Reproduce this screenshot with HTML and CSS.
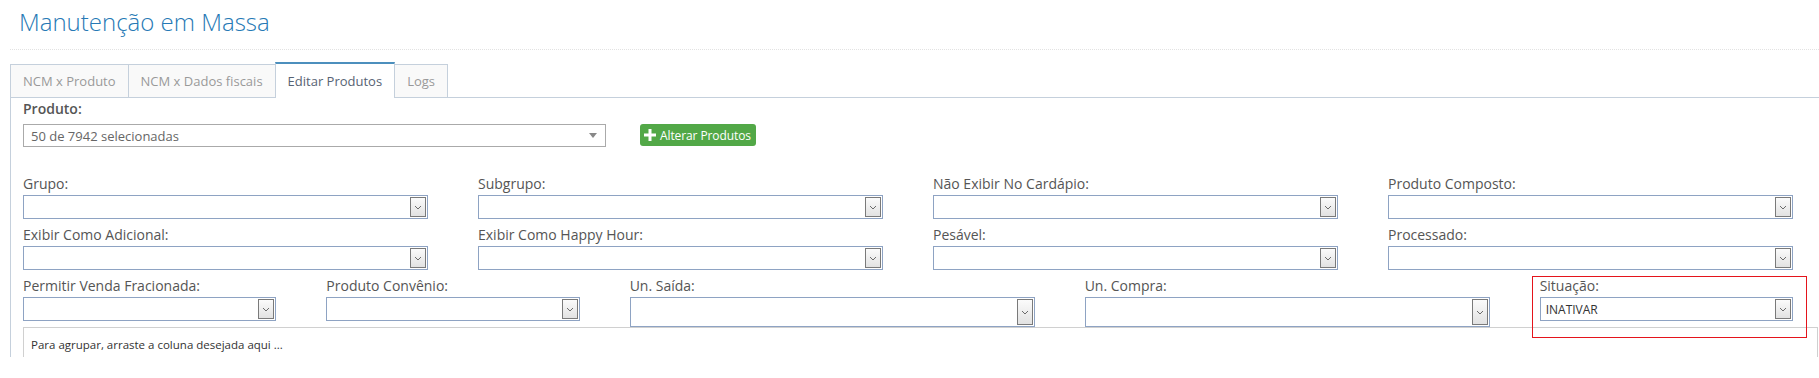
FILE: index.html
```html
<!DOCTYPE html>
<html lang="pt-BR">
<head>
  <meta charset="UTF-8">
  <title>Manutenção em Massa</title>
  <link rel="stylesheet" href="styles.css">
</head>
<body>
  <div class="page">
    <div class="page-header">
      <h1>Manutenção em Massa</h1>
    </div>

    <ul class="tabs">
      <li>NCM x Produto</li>
      <li>NCM x Dados fiscais</li>
      <li class="active">Editar Produtos</li>
      <li>Logs</li>
    </ul>

    <div class="tab-content">
      <label class="label-strong">Produto:</label>
      <div class="product-row">
        <div class="multiselect">
          <span>50 de 7942 selecionadas</span>
          <span class="caret"></span>
        </div>
        <button class="btn-success">
          <svg class="plus" viewBox="0 0 12 12" width="12" height="12"><path d="M4.5 0h3v4.5H12v3H7.5V12h-3V7.5H0v-3h4.5z" fill="#fff"/></svg>
          Alterar Produtos
        </button>
      </div>

      <div class="filters">
        <div class="field span-3">
          <label>Grupo:</label>
          <div class="combo"><span class="combo-btn"><svg viewBox="0 0 8 5" width="8" height="5"><polyline points="1,1 4,4 7,1" fill="none" stroke="#6b6b6b" stroke-width="1"/></svg></span></div>
        </div>
        <div class="field span-3">
          <label>Subgrupo:</label>
          <div class="combo"><span class="combo-btn"><svg viewBox="0 0 8 5" width="8" height="5"><polyline points="1,1 4,4 7,1" fill="none" stroke="#6b6b6b" stroke-width="1"/></svg></span></div>
        </div>
        <div class="field span-3">
          <label>Não Exibir No Cardápio:</label>
          <div class="combo"><span class="combo-btn"><svg viewBox="0 0 8 5" width="8" height="5"><polyline points="1,1 4,4 7,1" fill="none" stroke="#6b6b6b" stroke-width="1"/></svg></span></div>
        </div>
        <div class="field span-3">
          <label>Produto Composto:</label>
          <div class="combo"><span class="combo-btn"><svg viewBox="0 0 8 5" width="8" height="5"><polyline points="1,1 4,4 7,1" fill="none" stroke="#6b6b6b" stroke-width="1"/></svg></span></div>
        </div>

        <div class="field span-3">
          <label>Exibir Como Adicional:</label>
          <div class="combo"><span class="combo-btn"><svg viewBox="0 0 8 5" width="8" height="5"><polyline points="1,1 4,4 7,1" fill="none" stroke="#6b6b6b" stroke-width="1"/></svg></span></div>
        </div>
        <div class="field span-3">
          <label>Exibir Como Happy Hour:</label>
          <div class="combo"><span class="combo-btn"><svg viewBox="0 0 8 5" width="8" height="5"><polyline points="1,1 4,4 7,1" fill="none" stroke="#6b6b6b" stroke-width="1"/></svg></span></div>
        </div>
        <div class="field span-3">
          <label>Pesável:</label>
          <div class="combo"><span class="combo-btn"><svg viewBox="0 0 8 5" width="8" height="5"><polyline points="1,1 4,4 7,1" fill="none" stroke="#6b6b6b" stroke-width="1"/></svg></span></div>
        </div>
        <div class="field span-3">
          <label>Processado:</label>
          <div class="combo"><span class="combo-btn"><svg viewBox="0 0 8 5" width="8" height="5"><polyline points="1,1 4,4 7,1" fill="none" stroke="#6b6b6b" stroke-width="1"/></svg></span></div>
        </div>

        <div class="field span-2">
          <label>Permitir Venda Fracionada:</label>
          <div class="combo"><span class="combo-btn"><svg viewBox="0 0 8 5" width="8" height="5"><polyline points="1,1 4,4 7,1" fill="none" stroke="#6b6b6b" stroke-width="1"/></svg></span></div>
        </div>
        <div class="field span-2">
          <label>Produto Convênio:</label>
          <div class="combo"><span class="combo-btn"><svg viewBox="0 0 8 5" width="8" height="5"><polyline points="1,1 4,4 7,1" fill="none" stroke="#6b6b6b" stroke-width="1"/></svg></span></div>
        </div>
        <div class="field span-3">
          <label>Un. Saída:</label>
          <div class="combo tall"><span class="combo-btn"><svg viewBox="0 0 8 5" width="8" height="5"><polyline points="1,1 4,4 7,1" fill="none" stroke="#6b6b6b" stroke-width="1"/></svg></span></div>
        </div>
        <div class="field span-3">
          <label>Un. Compra:</label>
          <div class="combo tall"><span class="combo-btn"><svg viewBox="0 0 8 5" width="8" height="5"><polyline points="1,1 4,4 7,1" fill="none" stroke="#6b6b6b" stroke-width="1"/></svg></span></div>
        </div>
        <div class="field span-2 highlight">
          <label>Situação:</label>
          <div class="combo"><span class="combo-value">INATIVAR</span><span class="combo-btn"><svg viewBox="0 0 8 5" width="8" height="5"><polyline points="1,1 4,4 7,1" fill="none" stroke="#6b6b6b" stroke-width="1"/></svg></span></div>
        </div>
      </div>

      <div class="group-header">Para agrupar, arraste a coluna desejada aqui ...</div>
    </div>
  </div>
</body>
</html>
```

FILE: styles.css
```css
body {
  margin: 0;
  background: #ffffff;
  font-family: "Open Sans", "Noto Sans", sans-serif;
  color: #393939;
}

.page {
  padding-left: 10px;
  height: 378px;
  overflow: hidden;
}

.page-header {
  padding: 6px 0 11px 9px;
  border-bottom: 1px dotted #e2e2e2;
}

.page-header h1 {
  margin: 0;
  font-size: 24px;
  font-weight: 300;
  line-height: 32px;
  color: #2679b5;
}

/* tabs */
.tabs {
  display: flex;
  align-items: flex-end;
  list-style: none;
  margin: 12px 0 0;
  padding: 0;
  border-bottom: 1px solid #c5d0dc;
}

.tabs li {
  padding: 0 12px;
  line-height: 32px;
  font-size: 13px;
  color: #999999;
  background: #f9f9f9;
  border: 1px solid #c5d0dc;
  border-bottom: 0;
  margin-left: -1px;
}

.tabs li:first-child {
  margin-left: 0;
}

.tabs li.active {
  line-height: 34px;
  background: #ffffff;
  color: #576373;
  border-top: 2px solid #4c8fbd;
  margin-bottom: -1px;
  position: relative;
}

.tab-content {
  border-left: 1px solid #c5d0dc;
  padding-left: 12px;
  height: 259px;
  overflow: hidden;
}

/* produto */
.label-strong {
  display: block;
  font-size: 14px;
  font-weight: 600;
  line-height: 22px;
  color: #555555;
}

.product-row {
  display: flex;
  align-items: flex-start;
  gap: 34px;
  margin-top: 4px;
}

.multiselect {
  width: 583px;
  height: 23px;
  box-sizing: border-box;
  border: 1px solid #aaaaaa;
  display: flex;
  align-items: center;
  justify-content: space-between;
  padding: 0 8px 0 7px;
  font-size: 13px;
  color: #666666;
}

.caret {
  width: 0;
  height: 0;
  border-left: 4px solid transparent;
  border-right: 4px solid transparent;
  border-top: 5px solid #888888;
}

.btn-success {
  display: flex;
  align-items: center;
  gap: 4px;
  height: 22px;
  padding: 0 5px 0 4px;
  background: #52a847;
  border: none;
  border-radius: 3px;
  color: #ffffff;
  font-family: "Open Sans", sans-serif;
  font-size: 12px;
  letter-spacing: -0.1px;
}

/* filtros */
.filters {
  display: grid;
  grid-template-columns: repeat(12, 1fr);
  column-gap: 50px;
  row-gap: 5px;
  margin: 26px 26px 0 0;
}

.field {
  position: relative;
}

.span-2 {
  grid-column: span 2;
}

.span-3 {
  grid-column: span 3;
}

.field label {
  display: block;
  font-size: 14px;
  font-weight: 500;
  line-height: 22px;
  color: #555555;
}

.combo {
  height: 24px;
  box-sizing: border-box;
  border: 1px solid #8ea3c3;
  display: flex;
  align-items: center;
  justify-content: flex-end;
  padding: 1px;
}

.combo.tall {
  height: 30px;
}

.combo-value {
  flex: 1;
  padding-left: 4px;
  font-size: 12px;
  color: #333333;
}

.combo-btn {
  width: 16px;
  height: 100%;
  box-sizing: border-box;
  border: 1px solid #7a7a7a;
  background: linear-gradient(#fbfbfb, #e2e2e2);
  display: flex;
  align-items: center;
  justify-content: center;
}

.highlight::after {
  content: "";
  position: absolute;
  top: 1px;
  left: -8px;
  right: -14px;
  bottom: -11px;
  border: 1px solid #e4141c;
  pointer-events: none;
}

/* grid */
.group-header {
  margin-right: 1px;
  border: 1px solid #d0d0d0;
  padding: 9px 7px;
  height: 60px;
  font-size: 11.5px;
  line-height: 16px;
  color: #333333;
}
```
